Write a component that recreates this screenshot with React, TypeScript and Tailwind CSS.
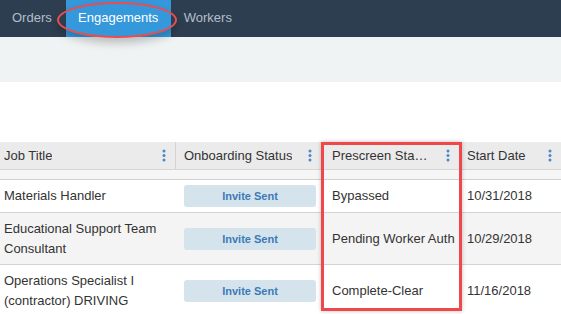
import React from 'react';

const cols = 'grid grid-cols-[176px_146px_138px_1fr]';

const Dots = () => (
    <svg width="4" height="13" viewBox="0 0 4 13" className="shrink-0">
        <circle cx="2" cy="2" r="1.5" fill="#4b88c7" />
        <circle cx="2" cy="6.5" r="1.5" fill="#4b88c7" />
        <circle cx="2" cy="11" r="1.5" fill="#4b88c7" />
    </svg>
);

interface HeadProps {
    label: string;
    pl: string;
    labelW?: string;
    divider?: boolean;
}

const HeadCell: React.FC<HeadProps> = ({ label, pl, labelW = '', divider = true }) => (
    <div className={`flex items-center justify-between h-full pr-[9px] ${pl} ${divider ? 'border-r border-[#d4d4d4]' : ''}`}>
        <span className={`truncate ${labelW}`}>{label}</span>
        <Dots />
    </div>
);

const rows = [
    { title: ['Materials Handler'], status: 'Bypassed', date: '10/31/2018', h: 'h-[33px]', bg: 'bg-white' },
    { title: ['Educational Support Team', 'Consultant'], status: 'Pending Worker Auth', date: '10/29/2018', h: 'h-[52px]', bg: 'bg-[#f4f4f4]' },
    { title: ['Operations Specialist I', '(contractor) DRIVING'], status: 'Complete-Clear', date: '11/16/2018', h: 'h-[52px]', bg: 'bg-white' },
];

export default function App() {
    return (
        <div className="relative w-[561px] h-[314px] overflow-hidden bg-white text-[13px] text-[#333] font-['Liberation_Sans',Arial,sans-serif]">
            <nav className="flex h-[37px] bg-[#2d3e50] text-[13px]">
                <div className="pl-[12px] pr-[14px] flex items-center pb-[2px] text-[#b4bfca]">Orders</div>
                <div className="w-[105px] flex items-center justify-center pb-[2px] bg-[#3498db] text-white">Engagements</div>
                <div className="pl-[13px] flex items-center pb-[2px] text-[#b4bfca]">Workers</div>
            </nav>
            <div className="h-[45px] bg-[#eff3f4]" />
            <div className="h-[60px]" />

            <div className={`${cols} h-[28px] bg-[#ebebeb] border-b border-[#d6d6d6]`}>
                <HeadCell label="Job Title" pl="pl-[4px]" />
                <HeadCell label="Onboarding Status" pl="pl-[8px]" />
                <HeadCell label="Prescreen Status" pl="pl-[10px]" labelW="w-[97px]" />
                <HeadCell label="Start Date" pl="pl-[7px]" divider={false} />
            </div>
            <div className="h-[10px] bg-[#f6f6f6] border-b border-[#d0d0d0]" />

            {rows.map((r) => (
                <div key={r.date} className={`${cols} ${r.h} ${r.bg} border-b border-[#d3d3d3] items-center leading-[20px]`}>
                    <div className="pl-[4px]">
                        {r.title.map((t) => (
                            <div key={t}>{t}</div>
                        ))}
                    </div>
                    <div className="pl-[8px] pr-[6px]">
                        <div className="h-[22px] rounded-[3px] bg-[#d5e3ec] text-[#3c7ab8] font-bold text-[11px] flex items-center justify-center">
                            Invite Sent
                        </div>
                    </div>
                    <div className="pl-[10px]">{r.status}</div>
                    <div className="pl-[7px]">{r.date}</div>
                </div>
            ))}

            {/* annotation: ellipse round active tab */}
            <div className="absolute left-[57px] top-[2px] w-[120px] h-[36px] rounded-[50%] border-2 border-[#ec4c4f] shadow-[0_5px_8px_rgba(0,0,0,0.22)]" />
            {/* annotation: box round prescreen column */}
            <div className="absolute left-[321px] top-[142px] w-[141px] h-[169px] border-[3px] border-[#f0474b] shadow-[0_0_4px_rgba(0,0,0,0.25)]" />
        </div>
    );
}
